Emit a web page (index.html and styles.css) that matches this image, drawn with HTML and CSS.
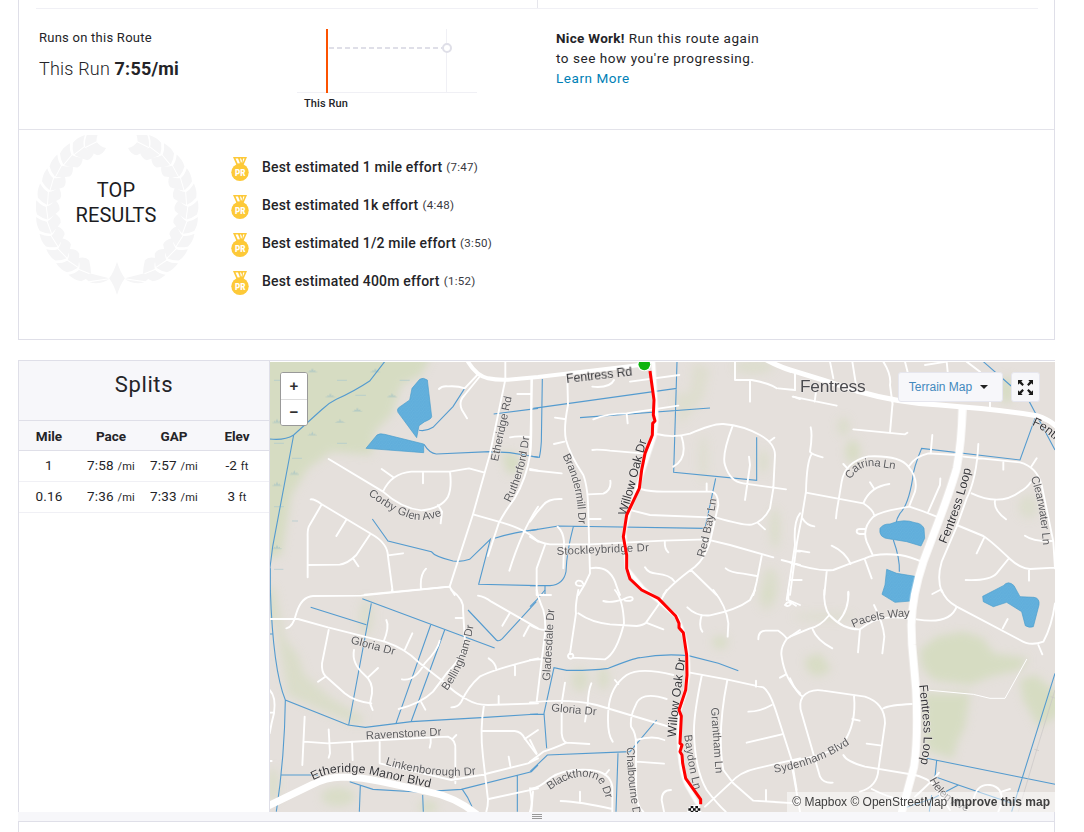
FILE: index.html
```html
<!DOCTYPE html>
<html lang="en">
<head>
<meta charset="utf-8">
<title>Activity</title>
<link rel="stylesheet" href="styles.css">
</head>
<body>
<main class="page">
<section class="card">
  <div class="card-top"><span class="divider"></span></div>
  <div class="route">
    <div class="route-info">
      <div class="route-label">Runs on this Route</div>
      <div class="route-pace">This Run <b>7:55/mi</b></div>
    </div>
    <div class="route-chart">
      <svg width="182" height="66" viewBox="1 0 182 66">
        <path d="M0 64.500H181M150.500 1V64" stroke="#f0f0f5" fill="none"/>
        <path d="M33 20H146" stroke="#dfdfe8" stroke-width="2" stroke-dasharray="5 3"/>
        <circle cx="151" cy="20" r="4" fill="#fff" stroke="#dfdfe8" stroke-width="2"/>
        <path d="M31 1V65" stroke="#fc5200" stroke-width="2"/>
      </svg>
      <span class="chart-label">This Run</span>
    </div>
    <div class="route-tip">
      <p><b>Nice Work!</b> Run this route again</p><p>to see how you're progressing.</p><a>Learn More</a>
    </div>
  </div>
  <div class="results">
    <div class="laurel">
      <svg width="164" height="162" viewBox="-82.500 -76 167 165" fill="#f5f5f6">
        <defs>
          <path id="leaf" d="M-71.500 0V-13Q-76-15-80-21Q-83-13-81.300-6.500Q-77-2-71.500 0ZM-70.500 0V-13Q-65-14-61-18.500Q-56-12-58.500-7Q-64-3-70.500 0Z"/>
          <g id="branch">
            <use href="#leaf" transform="rotate(-68)"/><use href="#leaf" transform="rotate(-56)"/><use href="#leaf" transform="rotate(-44)"/><use href="#leaf" transform="rotate(-32)"/><use href="#leaf" transform="rotate(-20)"/><use href="#leaf" transform="rotate(-8)"/><use href="#leaf" transform="rotate(4)"/><use href="#leaf" transform="rotate(16)"/><use href="#leaf" transform="rotate(28)"/><use href="#leaf" transform="rotate(40)"/><use href="#leaf" transform="rotate(52)"/><use href="#leaf" transform="rotate(63)"/>
            <path d="M-8 70L-27 65L-36 67L-29 73ZM-8 71L-28 74Q-18 77-8 71Z"/>
          </g>
        </defs>
        <use href="#branch"/><use href="#branch" transform="scale(-1 1)"/>
        <path d="M0 53Q3 63 8 70Q3 77 0 87Q-3 77-8 70Q-3 63 0 53Z"/>
      </svg>
      <h3><span>TOP</span><span>RESULTS</span></h3>
    </div>
    <svg class="defs" width="0" height="0"><symbol id="medal" viewBox="0 0 18 24"><path d="M2 0H16L12.500 8H5.500Z" fill="#fdc938"/><path d="M4.500 1.500H7L9 6.500H6.700ZM9 1.500H10L11 4L10 6ZM12 1.500H13.600L11.600 6.300Z" fill="#fff"/><circle cx="9" cy="15.300" r="8.700" fill="#fdc938"/><text x="9.200" y="18.800" text-anchor="middle" font-family="Roboto" font-weight="900" font-size="9" textLength="10.500" lengthAdjust="spacingAndGlyphs" fill="#fff">PR</text></symbol></svg>
    <ul class="efforts">
      <li><svg width="18" height="24"><use href="#medal"/></svg><b>Best estimated 1 mile effort</b><small>(7:47)</small></li>
      <li><svg width="18" height="24"><use href="#medal"/></svg><b>Best estimated 1k effort</b><small>(4:48)</small></li>
      <li><svg width="18" height="24"><use href="#medal"/></svg><b>Best estimated 1/2 mile effort</b><small>(3:50)</small></li>
      <li><svg width="18" height="24"><use href="#medal"/></svg><b>Best estimated 400m effort</b><small>(1:52)</small></li>
    </ul>
  </div>
</section>

<section class="split-view">
  <aside class="splits">
    <h2>Splits</h2>
    <div class="row head"><span>Mile</span><span>Pace</span><span>GAP</span><span>Elev</span></div>
    <div class="row"><span>1</span><span>7:58 <small>/mi</small></span><span>7:57 <small>/mi</small></span><span>-2 <small>ft</small></span></div>
    <div class="row"><span>0.16</span><span>7:36 <small>/mi</small></span><span>7:33 <small>/mi</small></span><span>3 <small>ft</small></span></div>
  </aside>
  <div class="map">
  <svg class="map-canvas" width="785" height="450" viewBox="270 362 785 450">
    <defs>
      <filter id="soft" filterUnits="userSpaceOnUse" x="250" y="340" width="830" height="500"><feGaussianBlur stdDeviation="4"/></filter>
      <pattern id="water" width="11" height="11" patternUnits="userSpaceOnUse"><rect width="11" height="11" fill="#60aedb"/><path d="M1 2h2M7 4h2M3 8h2M9 9h1" stroke="#76bce3" stroke-width="1.500"/></pattern>
      <g id="tuft"><path d="M-14 5H14" stroke="#b5cbc4" stroke-width="2"/><path d="M-9 4L-9-1L-4 2L0-7L4 2L9-1V4Z" fill="#b5cbc4"/></g>
    </defs>
    <rect x="270" y="362" width="785" height="450" fill="#e5e0dc"/>

    <g class="green" filter="url(#soft)">
      <g transform="translate(268 355) scale(.33333)">
        <path d="M-40 -40H510L460 60L400 90L370 180L320 230L310 300L190 290L120 340L70 420L40 600L-40 620Z"/>
        <path d="M700 290L750 300L760 340L720 360Z"/>
        <path d="M-40 690L20 700L50 850L90 900L110 960L190 1030L290 1090L270 1110L170 1070L60 1020L50 960L20 800L-40 780Z" opacity=".7"/>
        <ellipse cx="295" cy="785" rx="22" ry="55" opacity=".5"/><ellipse cx="210" cy="1325" rx="50" ry="28" opacity=".8"/><ellipse cx="480" cy="1355" rx="30" ry="18" opacity=".8"/><ellipse cx="15" cy="1290" rx="20" ry="50" opacity=".6"/>
      </g>
      <g transform="translate(530 355) scale(.33333)">
        <path d="M490 20L540 40L520 130L450 210L430 120L480 110Z" opacity=".45"/><ellipse cx="670" cy="35" rx="60" ry="22" opacity=".5"/><ellipse cx="520" cy="310" rx="16" ry="70" opacity=".4"/><ellipse cx="700" cy="320" rx="14" ry="35" opacity=".6"/><ellipse cx="735" cy="520" rx="16" ry="60" opacity=".6"/><ellipse cx="720" cy="690" rx="25" ry="50" opacity=".6"/><ellipse cx="710" cy="730" rx="25" ry="35" opacity=".5"/><ellipse cx="570" cy="862" rx="24" ry="20" opacity=".8"/><ellipse cx="150" cy="975" rx="26" ry="35" opacity=".7"/><ellipse cx="220" cy="970" rx="18" ry="35" opacity=".7"/>
      </g>
      <g transform="translate(790 590) scale(.33333)">
        <path d="M390 180L440 140L520 125L580 145L610 190L715 205L690 240L600 260L540 285L430 270L395 230ZM400 310L540 310L525 410L500 460L490 505L410 480ZM690 270L735 255L815 320V370L745 410L700 330Z"/>
        <path d="M45 205L90 190L125 240L80 260L50 240Z" opacity=".9"/><ellipse cx="100" cy="80" rx="90" ry="14" opacity=".4"/><ellipse cx="188" cy="-415" rx="22" ry="35" opacity=".9"/><ellipse cx="160" cy="-490" rx="18" ry="28" opacity=".6"/><ellipse cx="715" cy="-250" rx="30" ry="35" opacity=".5"/><ellipse cx="650" cy="-600" rx="20" ry="40"/>
      </g>
    </g>
    <g transform="translate(268 355) scale(.33333)">
      <use href="#tuft" x="133" y="46"/><use href="#tuft" x="322" y="46"/><use href="#tuft" x="187" y="121"/><use href="#tuft" x="268" y="164"/><use href="#tuft" x="216" y="198"/><use href="#tuft" x="133" y="236"/><use href="#tuft" x="79" y="353"/><use href="#tuft" x="27" y="387"/><use href="#tuft" x="27" y="576"/><use href="#tuft" x="27" y="198"/><use href="#tuft" x="372" y="121"/>
      <path d="M395 76h30M207 76h30M262 121h32M18 265h30M207 265h30M72 310h30M18 455h30M72 498h18M18 643h28M18 76h30" stroke="#aac9cf" stroke-width="2"/>
    </g>

    <g class="stream">
      <g transform="translate(268 355) scale(.33333)">
        <path d="M350 20L305 78Q260 108 205 133Q180 145 160 165L77 240Q50 257 5 252M77 240L14 575L5 645M590 100L555 155L495 217Q475 230 453 226M468 268Q485 295 505 297L665 290L725 293L810 307M677 177L810 160M313 492L360 558L490 590Q500 605 555 618Q580 622 605 613L667 553L632 688L810 692M680 550Q740 530 810 523M7 640V710"/>
      </g>
      <g transform="translate(530 355) scale(.33333)">
        <path d="M10 160L440 100M441 20L431 352L680 376V247M150 188L540 159M37 72L34 260Q32 290 28 307L5 304M0 527L85 513L525 520L557 370M130 515Q110 590 108 650Q100 690 60 692L0 692M45 692V720"/>
      </g>
      <g transform="translate(790 355) scale(.33333)">
        <path d="M580 20L660 90L718 140L795 285M735 190L690 315L395 280Q370 340 368 370Q355 450 330 475Q320 490 318 505M310 555Q330 610 328 650"/>
      </g>
      <g transform="translate(268 590) scale(.33333)">
        <path d="M7 0Q15 240 52 330L240 405L292 412L430 395L640 383L810 372M52 330Q50 500 25 665M38 555H150M283 26L680 174M128 52L295 104M310 40L242 405M488 105L384 400M530 120L430 393M600 60L685 150Q692 156 703 146L805 35M245 575L315 598L450 606L580 598L790 545L810 525M277 585L274 665M464 615L466 665M583 598Q600 620 612 650M748 555V665M5 132h8"/>
      </g>
      <g transform="translate(530 590) scale(.33333)">
        <path d="M0 50L20 30L45 0M50 475L42 370L72 233L110 241Q180 242 235 235Q310 205 330 203Q400 190 475 197L565 220L625 242M0 373h42M0 545L52 495L300 485L380 390M264 490L258 665"/>
      </g>
      <g transform="translate(790 590) scale(.33333)">
        <path d="M410 505L795 583M440 512L435 560L505 585L665 640M505 585L430 625L340 655M795 250L665 665M425 615L418 665"/>
        <path class="rail" d="M795 300L740 480L685 665M733 478l14 4M782 320l12 4"/>
      </g>
    </g>

    <g fill="url(#water)" stroke="#4a9dcc" stroke-width="2">
      <path transform="translate(268 355) scale(.33333)" d="M455 73Q465 66 478 75L491 185Q490 192 470 200L453 212L446 248L390 172Q386 163 392 158L425 135L432 100ZM294 280L327 240Q335 234 350 238L467 267V293Z"/>
      <path transform="translate(790 355) scale(.33333)" d="M270 520Q280 506 300 507Q340 490 375 503Q395 505 402 520L404 550L393 573L350 560L300 552Q265 550 270 520ZM290 643L320 655L375 664L362 738L315 742L276 718L285 690ZM578 724L640 692Q655 675 672 692L690 725L732 727Q750 730 747 750L730 815Q718 820 706 812L695 770L650 742L610 755L580 740Z"/>
    </g>

    <g class="road">
      <g transform="translate(268 355) scale(.33333)">
        <path d="M712 20V74L665 300L615 478L545 695L560 720M628 60L590 100Q570 92 540 94Q522 92 513 102M634 66L590 120Q570 140 582 165L597 190M792 74L786 300Q775 370 740 430Q710 470 692 505L660 603M748 117H790M726 247Q750 242 786 246M182 312L345 410Q400 460 460 466Q520 460 540 425Q552 400 546 350M345 410Q370 355 430 350L545 350L603 340L650 353M341 342L378 368M465 354V385M510 450L522 470L518 505M128 433Q140 432 160 447L310 537Q360 565 360 605L374 710M160 450L125 510Q118 520 119 545V667M235 494L205 543M305 540L265 600Q240 625 215 629L119 630M255 610L271 634M360 601L405 595M459 702Q455 660 474 641M290 719L545 695M615 478L700 502Q780 525 810 560M786 342L810 347M810 455Q760 530 724 647"/>
      </g>
      <g transform="translate(530 355) scale(.33333)">
        <path d="M112 70L114 150Q100 220 108 255Q120 300 160 360Q175 400 175 480L180 655Q165 690 145 720M75 188L103 192M72 267L103 260M187 95Q240 100 252 75M300 80L448 60M190 193Q230 175 290 175L445 152M290 175L293 205M380 237Q430 250 480 236Q550 205 580 207Q640 212 690 240Q735 265 735 300L730 400L720 460Q700 500 665 509Q640 512 560 488L360 480L305 466M720 258L733 248M685 505L705 523M455 245Q475 310 430 335M607 215Q575 300 585 330Q600 380 640 385L768 403M657 305L660 330L645 435M187 285Q200 282 240 287L345 296M332 402Q360 410 400 410L545 410Q565 415 565 450L540 560Q525 610 495 635Q420 690 400 720M530 385V410M175 418L220 416Q245 405 241 377M178 492H212M0 545Q30 565 60 568L180 568L400 557L530 553L600 570L730 607M755 615L810 630M83 515Q100 530 102 560L100 640M45 570L20 640V720M0 500Q20 470 40 450Q55 430 95 432M0 345L95 355M4 70V230Q3 300 0 300M405 557Q402 580 415 592M345 637Q355 655 380 656Q420 660 432 678M483 645L560 720M587 640Q600 652 640 656L680 663M695 603L680 680L670 720M180 640Q235 630 255 680Q265 710 270 720M155 692Q138 695 137 684Q142 672 156 680L162 690M615 20V75L665 75Q720 85 740 100M660 75V140M745 100L795 105V50M810 475Q790 500 795 570L770 735M790 125L810 132M795 588L810 590M780 675H810"/>
      </g>
      <g transform="translate(790 355) scale(.33333)">
        <path d="M62 217Q68 240 60 290Q65 298 98 307M65 297Q50 320 48 410L35 490Q20 560 18 585L0 720M37 490Q50 512 73 514M48 413L220 445Q250 465 252 480M160 327L175 343M138 490L140 470L155 380Q165 320 235 304Q330 300 355 335Q385 370 375 410L357 455M358 332Q375 305 415 295L500 300M427 240L422 295M190 223L345 238L352 233M308 140L300 233M240 382L253 402M220 445Q240 395 298 387M451 370L450 390L415 470M440 485Q400 468 358 455L330 460Q270 470 250 485Q215 520 230 560L248 600M228 522H210Q200 522 200 529Q200 536 210 537H225M0 622Q80 650 130 645Q180 625 225 610Q260 592 330 600Q360 605 395 620M125 572Q165 590 182 627M225 615L245 670M110 650L103 720M15 585L58 592M0 675h35M520 305L690 322Q740 335 755 390L790 560L795 640M740 310L725 333M640 322v22M565 267Q560 370 530 430L500 515L455 620Q440 670 455 710M545 415Q630 455 690 410Q710 400 722 382M615 437Q610 465 648 493M500 510L580 543Q600 555 660 612Q690 640 720 642L795 638M583 547L560 595M655 612L620 655Q600 678 527 675M717 642v35M705 542Q730 560 790 558M8 125L140 152M78 110l-4 30M15 50v55M120 20L130 70M187 20L198 90M280 20Q305 60 300 90L308 150M345 20l8 32M405 30L470 20L473 50M530 20L570 50M600 140v15M175 712v8"/>
      </g>
      <g transform="translate(268 590) scale(.33333)">
        <path d="M55 115Q75 112 85 70Q100 20 135 18L280 17L545 -10M5 87H90L180 112L350 155Q410 175 450 215L520 270Q560 310 600 330Q625 345 660 345L810 340M372 0v8M182 120L162 220Q160 245 172 258L230 310Q260 335 310 340M150 275L172 260M258 180Q250 220 290 255Q315 275 312 310L306 340L314 360M300 262L330 234M355 90Q365 110 347 155M433 130L411 178M515 152Q510 180 470 220Q440 275 402 268M550 0Q590 30 585 60L590 140Q595 190 540 245L495 305Q460 340 392 357M460 337l12 22M563 84h22M630 17Q650 20 670 35L810 115M725 70L703 107M783 108L767 138M550 352Q570 352 580 335Q600 290 635 260Q670 240 810 205M662 205Q685 220 685 240M741 228v28M692 318v25M648 345Q635 420 645 500L660 630Q660 650 655 665M110 380L103 525M108 455L180 460L340 450L540 440Q565 450 562 480V580M182 418L186 490L182 503M252 455L254 510M555 445l10-10M488 445Q490 460 485 473M335 455V520L550 570L640 555L780 520L810 505M722 500l5 28M645 423H740Q760 425 770 445L805 492M770 447L810 420M662 627L810 595M795 605Q792 640 790 665M5 300Q25 320 18 370Q10 400 5 430M5 368h12M5 513h6"/>
      </g>
      <g transform="translate(530 590) scale(.33333)">
        <path d="M20 0Q25 25 40 60Q48 90 45 130L20 335M30 15h33M0 105Q25 120 45 120M0 210L37 207M0 337Q120 325 200 345L400 405L415 410M145 0Q135 50 138 70L120 190M130 203L225 208Q260 190 282 100Q280 30 255 0M117 192a8 8 0 1 0 10 0ZM145 70Q185 98 240 103L320 108Q340 105 348 98L385 45L410 0M348 98L400 118M220 33Q240 40 280 28Q305 15 308 25Q310 35 285 32M550 0Q590 50 595 100L593 140M472 52Q500 80 540 76Q620 60 660 30L675 0M515 75Q505 110 517 125M430 255Q330 230 290 255Q240 290 235 360Q230 430 248 455M255 270l10 12M410 327Q330 300 315 350Q300 380 303 410Q318 430 318 460V600Q320 650 340 665M318 450Q370 435 403 450M320 515L402 521M480 248L590 268L700 292Q720 305 740 370L785 510L800 600M515 258Q490 380 492 430Q495 540 530 600Q560 640 587 665M592 270Q560 430 580 540L610 580L670 632L800 640M678 272v18M655 365Q690 365 725 345M650 458L755 433M708 600v32M525 650L600 580Q630 545 680 535L810 505M685 148Q685 120 710 122L745 122Q770 140 770 147Q750 175 755 200Q765 270 810 310M770 147L810 120M750 263l18-10M775 0V30L810 45M765 45Q775 30 783 42Q775 52 765 45M105 278L95 340V430Q98 455 110 458L178 462M110 458Q60 480 40 485L0 515M0 450L20 490M184 280Q175 300 173 345L165 395M0 595Q20 600 60 565Q100 535 180 540Q240 545 247 590V665M225 555l12-15M92 633Q150 635 247 657M150 605v28M0 600Q10 640 0 665M423 600Q395 600 395 630L402 665"/>
      </g>
      <g transform="translate(790 590) scale(.33333)">
        <path d="M103 0Q100 50 118 75Q160 120 210 118Q250 85 300 82Q340 80 365 88M118 75Q90 110 60 115L0 140M175 5Q178 60 143 97M68 118Q80 150 127 175M210 118L204 187M252 45Q280 100 283 140L277 190M380 88Q480 105 500 50M455 0Q465 30 500 50L690 150Q720 170 760 155Q785 110 795 40M653 87L638 115M745 165l12 28M427 12L450 0M0 265Q20 310 38 320Q60 295 100 302L225 320Q285 340 285 400L265 540Q262 590 210 605M38 320Q25 340 35 370L90 560Q100 580 128 578M192 318Q200 400 160 460Q130 490 0 515M187 387l22 5M280 355Q300 345 365 342M230 461l40 5M160 495Q170 515 225 530L375 555Q430 570 440 600L480 660M375 620Q430 570 447 548M245 597Q290 620 340 632M0 35l18 12M550 630Q560 580 600 585Q640 590 635 640L625 665M635 605l25-8M8 540L30 665"/>
        <path class="thin" d="M410 300L550 313L600 325L645 325L710 208"/>
      </g>
      <g class="major">
        <path transform="translate(268 355) scale(.33333)" d="M600 20Q625 62 660 70Q690 76 720 74L810 66L1116 30L1166 14"/>
        <path transform="translate(530 355) scale(.33333)" d="M370 25L380 190L375 240L345 330L300 460L283 530L290 640L340 700L440 785Q475 850 475 955L465 1015L448 1065Q440 1225 470 1290L505 1350"/>
        <path class="wide" transform="translate(790 355) scale(.33333)" d="M-70 15Q-30 36 0 45Q100 75 200 108Q330 145 450 150L510 155Q640 165 740 182Q780 195 800 215"/>
        <path class="loop" transform="translate(790 355) scale(.33333)" d="M517 162Q515 260 500 340Q480 410 430 540L400 620Q366 720 364 810L366 870L378 1005Q385 1145 372 1235L335 1372"/>
        <path class="blvd" transform="translate(268 590) scale(.33333)" d="M0 648L130 585Q180 560 225 562Q270 560 340 575L480 605Q560 620 625 672"/>
      </g>
    </g>

    <g class="labels">
      <defs>
        <path id="l1" d="M690 320L732 123"/><path id="l2" d="M727 443Q775 350 784 240"/><path id="l3" d="M300 418Q360 467 430 492Q480 502 534 476"/>
        <path id="l4" d="M97 303Q145 390 146 519"/><path id="l5" d="M288 483L315 390Q330 330 352 250"/><path id="l6" d="M522 608Q548 520 560 425"/>
        <path id="l7" d="M182 374Q207 327 260 334L319 343"/><path id="l8" d="M468 568Q520 450 545 332"/><path id="l9" d="M722 368Q750 440 760 580"/><path id="l10" d="M725 210Q790 235 860 330"/>
        <path id="l11" d="M537 303Q600 220 618 98"/><path id="l12" d="M352 523Q500 570 630 552"/><path id="l13" d="M135 571Q200 535 300 552L496 595"/>
        <path id="l14" d="M60 600Q140 540 200 570Q215 580 229 632"/><path id="l15" d="M290 472Q292 600 320 720"/><path id="l16" d="M463 435Q475 540 495 608"/><path id="l17" d="M438 442Q438 400 467 198"/>
        <path id="l18" d="M-47 548Q80 530 186 458"/><path id="l19" d="M190 113Q260 80 366 80"/><path id="l20" d="M388 285L400 400Q405 470 389 529"/><path id="l21" d="M418 570Q450 640 560 676"/>
      </defs>
      <g transform="translate(268 355) scale(.33333)">
        <text><textPath href="#l1" textLength="198">Etheridge Rd</textPath></text>
        <text><textPath href="#l2" textLength="207">Rutherford Dr</textPath></text>
        <text><textPath href="#l3" textLength="244">Corby Glen Ave</textPath></text>
      </g>
      <g transform="translate(530 355) scale(.33333)">
        <text class="dark" transform="translate(110 85) rotate(-6.500)" textLength="199">Fentress Rd</text>
        <text><textPath href="#l4" textLength="212">Brandermill Dr</textPath></text>
        <text transform="translate(80 600) rotate(-2.500)" textLength="277">Stockleybridge Dr</text>
        <text class="dark"><textPath href="#l5" textLength="234">Willow Oak Dr</textPath></text>
        <text><textPath href="#l6" textLength="180">Red Bay Ln</textPath></text>
      </g>
      <g transform="translate(790 355) scale(.33333)">
        <text class="town" x="30" y="110" textLength="197">Fentress</text>
        <text><textPath href="#l7" textLength="150">Catrina Ln</textPath></text>
        <text class="dark"><textPath href="#l8" textLength="238">Fentress Loop</textPath></text>
        <text><textPath href="#l9" textLength="207">Clearwater Ln</textPath></text>
        <text class="dark"><textPath href="#l10">Fentress</textPath></text>
      </g>
      <g transform="translate(268 590) scale(.33333)">
        <text transform="translate(247 160) rotate(15)" textLength="136">Gloria Dr</text>
        <text><textPath href="#l11" textLength="214">Bellingham Dr</textPath></text>
        <text transform="translate(294 448) rotate(-3)" textLength="227">Ravenstone Dr</text>
        <text><textPath href="#l12" textLength="276">Linkenborough Dr</textPath></text>
        <text class="dark"><textPath href="#l13" textLength="360">Etheridge Manor Blvd</textPath></text>
      </g>
      <g transform="translate(530 590) scale(.33333)">
        <text transform="translate(60 273) rotate(-86.500)" textLength="216">Gladesdale Dr</text>
        <text transform="translate(63 364) rotate(5)" textLength="136">Gloria Dr</text>
        <text><textPath href="#l14" textLength="214">Blackthorne Dr</textPath></text>
        <text><textPath href="#l15" textLength="216">Chalbourne Dr</textPath></text>
        <text><textPath href="#l16" textLength="168">Baydon Ln</textPath></text>
        <text class="dark"><textPath href="#l17" textLength="238">Willow Oak Dr</textPath></text>
        <text transform="translate(543 353) rotate(86)" textLength="198">Grantham Ln</text>
      </g>
      <g transform="translate(790 590) scale(.33333)">
        <text><textPath href="#l18" textLength="244">Sydenham Blvd</textPath></text>
        <text><textPath href="#l19" textLength="174">Pacels Way</textPath></text>
        <text class="dark"><textPath href="#l20" textLength="238">Fentress Loop</textPath></text>
        <text><textPath href="#l21" textLength="152">Helen Ave</textPath></text>
      </g>
    </g>

    <g transform="translate(530 355) scale(.33333)">
      <path d="M360 48L372 135L370 180L375 198L368 205L367 240L345 295L335 345L328 400L290 480L280 545L290 600V640L300 672L335 705L385 730L437 783L447 805V818L460 833L470 900L471 960L467 1005L447 1065L454 1083L450 1165L456 1170L450 1190L456 1200L458 1225L467 1270L512 1333V1348" fill="none" stroke="#f00" stroke-width="9" stroke-linejoin="round"/>
      <circle cx="343" cy="28" r="21" fill="#fff"/><circle cx="343" cy="28" r="17.500" fill="#0fb40f"/>
      <circle cx="493" cy="1370" r="21" fill="#fff"/>
      <path d="M482 1353h8v7h-8zM496 1353h8v7h-8zM475 1360h8v7h-8zM489 1360h8v7h-8zM503 1360h8v7h-8zM482 1367h8v7h-8zM496 1367h8v7h-8z" fill="#111"/>
    </g>
  </svg>
  <div class="zoom"><button>+</button><button>−</button></div>
  <div class="map-tools">
    <button class="type"><span>Terrain Map</span><i></i></button>
    <button class="full"><svg width="15" height="15" viewBox="0 0 16 16" fill="#1a1a1a"><path id="arrow" d="M0 0H5L3.500 1.600L6.300 4.700L4.700 6.300L1.600 3.500L0 5Z"/><use href="#arrow" transform="rotate(90 8 8)"/><use href="#arrow" transform="rotate(180 8 8)"/><use href="#arrow" transform="rotate(270 8 8)"/></svg></button>
  </div>
  <div class="credit">© Mapbox © OpenStreetMap <b>Improve this map</b></div>
  </div>
</section>
<div class="grip"><i></i></div>
<div class="below"></div>
</main>
</body>
</html>
```
FILE: styles.css
```css
* { box-sizing: border-box; }
body { margin: 0; background: #fff; color: #242428; font-family: Roboto, "Liberation Sans", sans-serif; font-size: 13px; overflow: hidden; }
b { font-weight: 500; }
h2, h3, p, ul { margin: 0; padding: 0; font-weight: 400; }
.page { width: 1037px; height: 832px; margin-left: 18px; overflow: hidden; }
.defs { position: absolute; }

.card { height: 340px; border: 1px solid #dfdfe8; border-top: 0; }
.card-top { height: 9px; margin: 0 16px 0 17px; border-bottom: 1px solid #f0f0f5; }
.divider { display: block; width: 1px; height: 8px; margin-left: 501px; background: #e6e6ec; }
.route { display: grid; grid-template-columns: 278px 259px 1fr; height: 121px; border-bottom: 1px solid #e3e3ea; }
.route-info { padding: 20px 0 0 20px; }
.route-label { line-height: 18px; letter-spacing: .25px; }
.route-pace { margin-top: 9px; font-size: 18px; line-height: 26px; font-weight: 300; letter-spacing: .2px; }
.route-pace b { font-weight: 700; }
.route-chart { display: flex; flex-direction: column; padding-top: 19px; }
.chart-label { margin: 4px 0 0 7px; font-size: 11px; line-height: 12px; font-weight: 500; letter-spacing: .1px; }
.route-tip { padding-top: 19px; font-size: 13.5px; line-height: 20px; letter-spacing: .55px; }
.route-tip b { font-weight: 700; letter-spacing: .3px; }
.route-tip a { display: block; color: #007fb6; }

.results { display: flex; height: 209px; }
.laurel { display: grid; width: 212px; padding: 5px 0 0 17px; }
.laurel > * { grid-area: 1 / 1; }
.laurel h3 { display: flex; flex-direction: column; align-items: center; width: 160px; padding-top: 43px; font-size: 20px; line-height: 25px; letter-spacing: .1px; color: #1c1c22; }
.efforts { list-style: none; padding-top: 18px; }
.efforts li { display: flex; align-items: center; height: 38px; }
.efforts svg { margin: 3px 13px 0 0; }
.efforts b { font-size: 14px; letter-spacing: .19px; }
.efforts small { margin-left: 4px; font-size: 11.5px; letter-spacing: .3px; color: #38383e; }

.split-view { display: flex; height: 452px; margin-top: 20px; border-top: 1px solid #dfdfe8; }
.splits { width: 252px; border-left: 1px solid #dfdfe8; border-right: 1px solid #dfdfe8; }
.splits h2 { height: 60px; padding-top: 9px; border-bottom: 1px solid #dfdfe8; background: #f7f7fa; text-align: center; font-size: 22px; line-height: 30px; letter-spacing: .6px; }
.row { display: grid; grid-template-columns: 60px 64px 62px 64px; height: 31px; padding-bottom: 2px; align-items: center; text-align: center; border-bottom: 1px solid #f0f0f5; font-size: 13.5px; letter-spacing: .2px; }
.row small { font-size: 11px; }
.row.head { height: 30px; padding: 0; border-color: #dfdfe8; background: #f7f7fa; font-weight: 700; letter-spacing: 0; }

.map { position: relative; width: 785px; padding-top: 1px; }
.map-canvas { display: block; }
.green { fill: #d6dcc2; }
.stream { fill: none; stroke: #549bcf; stroke-width: 3.300; }
.rail { stroke: #c9c6c5; stroke-width: 2; }
.road { fill: none; stroke: #fff; stroke-width: 5.700; stroke-linecap: round; stroke-linejoin: round; }
.major { stroke-width: 12; }
.wide { stroke-width: 15; }
.loop { stroke-width: 24; }
.blvd { stroke-width: 21; }
.thin { stroke-width: 3; }
.labels { font-family: "Liberation Sans", sans-serif; font-size: 34px; fill: #5c5c5e; stroke: #eeeae8; stroke-width: 3; paint-order: stroke; }
.labels .dark { font-size: 37px; fill: #353538; }
.labels .town { font-size: 52px; fill: #4c4c50; }

.zoom { position: absolute; left: 10px; top: 11px; width: 28px; height: 54px; border: 1px solid #999; border-radius: 3px; background: #fff; overflow: hidden; }
.zoom button { display: block; width: 26px; height: 26px; padding: 0; border: 0; background: #fff; color: #303030; font: bold 15px/26px "Liberation Sans", sans-serif; }
.zoom button + button { padding-bottom: 2px; border-top: 1px solid #ddd; line-height: 22px; }
.map-tools { position: absolute; right: 15px; top: 11px; display: flex; gap: 8px; }
.map-tools button { display: flex; align-items: center; justify-content: center; height: 30px; padding: 0; border: 1px solid #e6e6ee; border-radius: 3px; background: #f7f7fa; }
.map-tools .type { gap: 8px; width: 105px; padding-right: 4px; color: #4389bd; font: 12px "Liberation Sans", sans-serif; }
.type i { border: 4px solid transparent; border-top-color: #222; border-bottom: 0; }
.map-tools .full { width: 29px; }
.credit { position: absolute; right: 0; bottom: 0; padding: 0 5px; height: 20px; background: rgba(255,255,255,.5); font: 12px/20px "Liberation Sans", sans-serif; color: #404040; white-space: nowrap; }
.credit b { font-weight: 700; }

.grip { display: flex; align-items: center; justify-content: center; height: 10px; border-right: 1px solid #dfdfe8; border-bottom: 1px solid #dfdfe8; background: #f7f7fa; }
.grip i { width: 10px; height: 5px; margin-left: 2px; border: solid #999; border-width: 1px 0; background: linear-gradient(#f7f7fa 1px, #999 1px 2px, #f7f7fa 2px); }
.below { height: 12px; border: solid #dfdfe8; border-width: 0 1px; }
```
